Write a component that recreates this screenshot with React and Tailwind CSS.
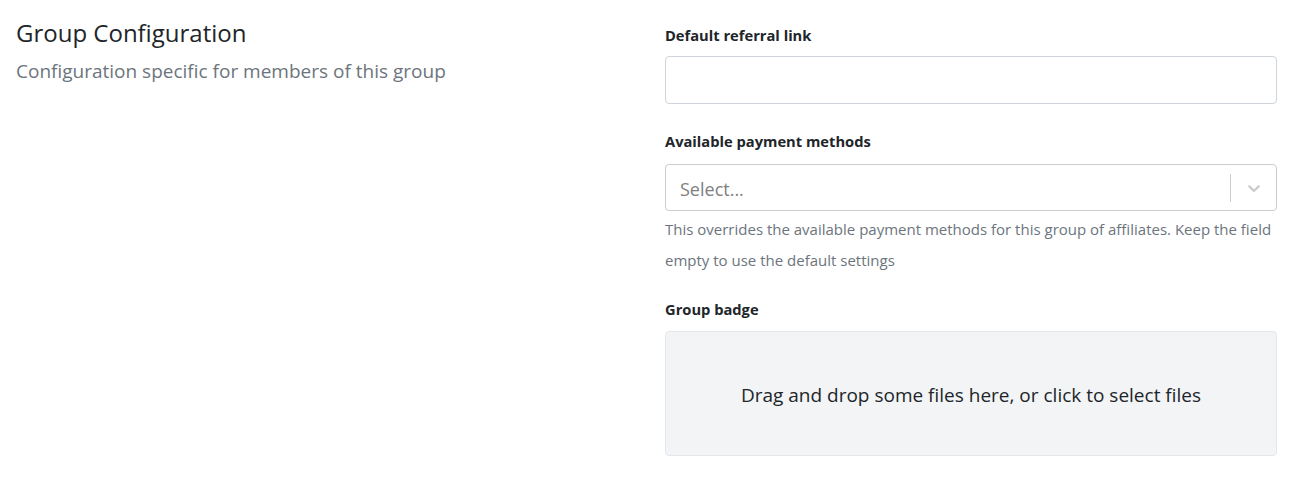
import React from 'react';

// Bloc de configuration du groupe : description à gauche, champs à droite
export default function App() {
  return (
    <div className="min-h-[500px] bg-white px-4 pt-4" style={{ fontFamily: '"Open Sans", "Noto Sans", sans-serif' }}>
      <div className="flex">
        <div className="flex-1">
          <h2 className="pt-px text-[24px] leading-8 text-[#212529]">Group Configuration</h2>
          <p className="mt-[10px] text-[19px] leading-6 text-[#6c757d]">Configuration specific for members of this group</p>
        </div>

        <div className="w-[612px] shrink-0">
          <label className="block pt-[9px] text-[14.7px] font-bold leading-5 text-[#212529]">Default referral link</label>
          <input
            type="text"
            className="mt-[11px] block h-[48px] w-full rounded-[4px] border border-[#ced4da] bg-white px-3 text-[17px] outline-none"
          />

          <label className="mt-[27px] block text-[14.7px] font-bold leading-5 text-[#212529]">Available payment methods</label>
          <div className="mt-[13px] flex h-[47px] items-center rounded-[4px] border border-[#cccccc] bg-white">
            <span className="flex-1 pl-[14px] pt-[4px] text-[18px] text-[#808080]">Select...</span>
            <span className="h-[28px] w-px bg-[#cccccc]" />
            <span className="flex w-[45px] justify-center text-[#cccccc]">
              <svg width="20" height="20" viewBox="0 0 20 20" fill="currentColor">
                <path d="M4.516 7.548c0.436-0.446 1.043-0.481 1.576 0l3.908 3.747 3.908-3.747c0.533-0.481 1.141-0.446 1.574 0 0.436 0.445 0.408 1.197 0 1.615-0.406 0.418-4.695 4.502-4.695 4.502-0.217 0.223-0.502 0.335-0.787 0.335s-0.57-0.112-0.789-0.335c0 0-4.287-4.084-4.695-4.502s-0.436-1.17 0-1.615z" />
              </svg>
            </span>
          </div>
          <p className="mt-[3px] text-[15px] leading-[31px] text-[#6c757d]">
            This overrides the available payment methods for this group of affiliates. Keep the field empty to use the default settings
          </p>

          <label className="mt-[23px] block text-[14.7px] font-bold leading-5 text-[#212529]">Group badge</label>
          <div className="mt-[12px] flex h-[125px] items-center justify-center rounded-[4px] border border-[#e5e7eb] bg-[#f3f4f6]">
            <span className="pt-[3px] text-[19px] text-[#212529]">Drag and drop some files here, or click to select files</span>
          </div>
        </div>
      </div>
    </div>
  );
}
